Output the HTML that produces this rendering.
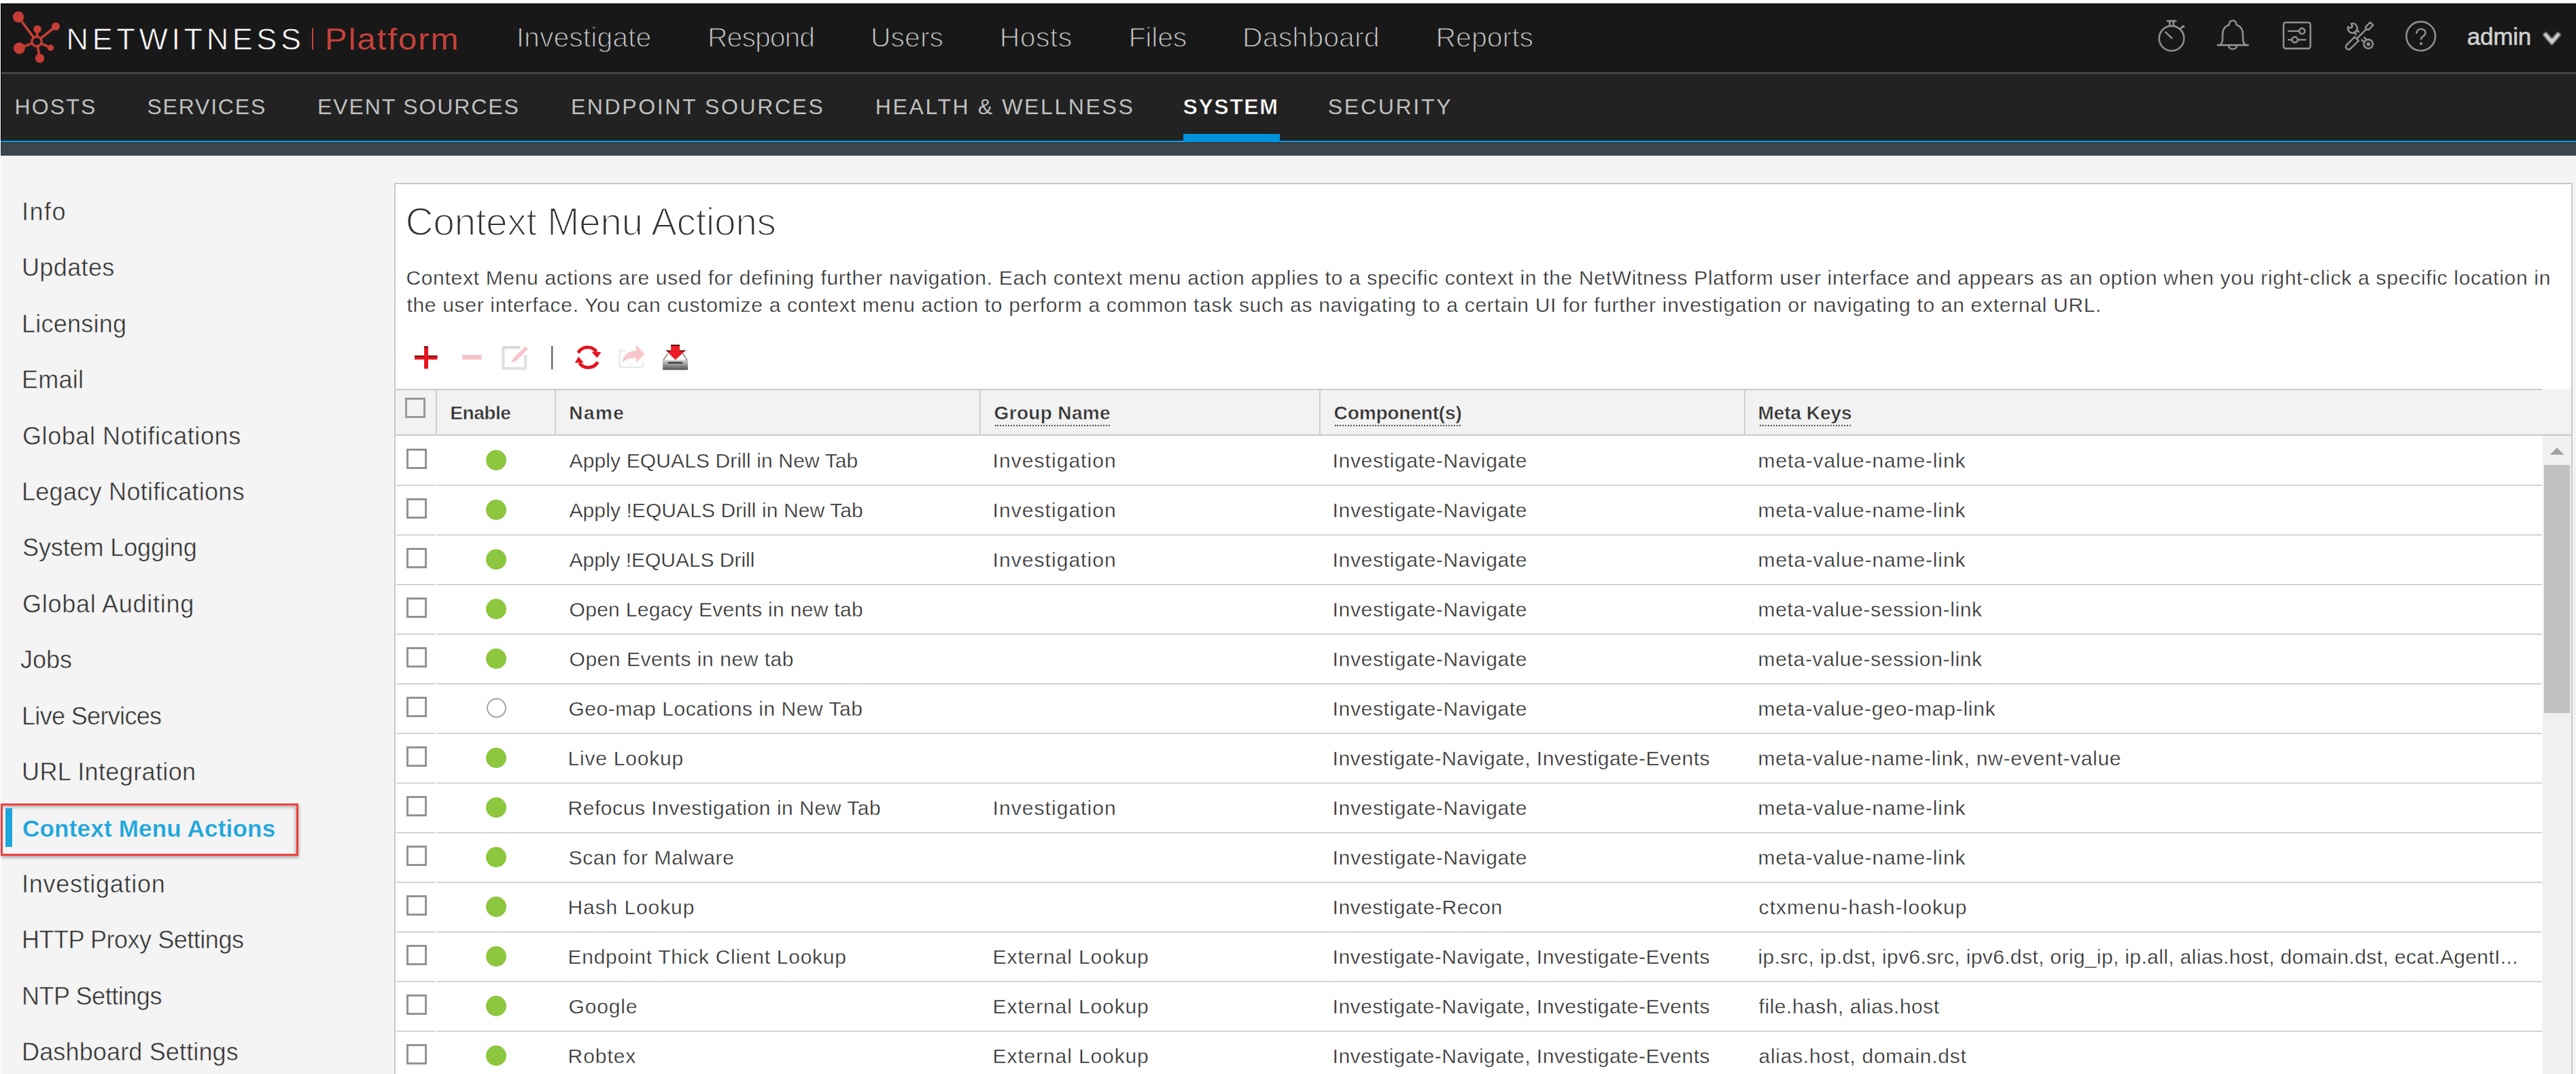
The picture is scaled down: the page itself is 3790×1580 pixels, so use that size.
<!DOCTYPE html>
<html><head><meta charset="utf-8">
<style>
html,body{margin:0;padding:0}
body{width:3790px;height:1580px;overflow:hidden;position:relative;background:#f4f4f4;font-family:"Liberation Sans",sans-serif}
.b{position:absolute}
.t{position:absolute;white-space:pre;line-height:1;font-family:"Liberation Sans",sans-serif}
svg{position:absolute;overflow:visible}
</style></head><body>
<!-- frame -->
<div class="b" style="left:0;top:0;width:3790px;height:5px;background:#fff"></div>
<div class="b" style="left:0;top:0;width:1px;height:1580px;background:#fff"></div>
<!-- top nav -->
<div class="b" style="left:1px;top:5px;width:3789px;height:102px;background:#181818"></div>
<div class="b" style="left:1px;top:5px;width:3789px;height:1px;background:#000"></div>
<div class="b" style="left:1px;top:5px;width:1px;height:224px;background:#000"></div>
<div class="b" style="left:2px;top:106px;width:3788px;height:3px;background:#434343"></div>
<!-- sub nav -->
<div class="b" style="left:2px;top:109px;width:3788px;height:98px;background:#222222"></div>
<div class="b" style="left:1px;top:207px;width:3789px;height:2px;background:#0d9de2"></div>
<div class="b" style="left:1741px;top:197px;width:142px;height:12px;background:#0093db"></div>
<div class="b" style="left:1px;top:209px;width:3789px;height:20px;background:#3a454e"></div><div class="b" style="left:1px;top:209px;width:3789px;height:2px;background:#343e46"></div>

<!-- logo -->
<svg style="left:0;top:0" width="100" height="100" viewBox="0 0 100 100">
 <g stroke="#c53d35" stroke-width="3.6" fill="none">
  <line x1="27" y1="25" x2="54" y2="61"/>
  <line x1="82" y1="39" x2="54" y2="61"/>
  <line x1="55" y1="43" x2="54" y2="61"/>
  <line x1="28.4" y1="71" x2="54" y2="61"/>
  <line x1="74.5" y1="70.3" x2="54" y2="61"/>
  <line x1="58.5" y1="85.7" x2="54" y2="61"/>
 </g>
 <circle cx="54" cy="61" r="5.6" fill="#181818"/>
 <circle cx="54" cy="61" r="7.2" stroke="#c53d35" stroke-width="3.2" fill="none"/>
 <g fill="#c53d35">
  <circle cx="27" cy="25" r="8.2"/>
  <circle cx="82" cy="39" r="6.1"/>
  <circle cx="55" cy="43" r="5.8"/>
  <circle cx="28.4" cy="71" r="8.4"/>
  <circle cx="74.5" cy="70.3" r="4.7"/>
  <circle cx="58.5" cy="85.7" r="6.7"/>
 </g>
</svg>
<div class="b" style="left:459px;top:41px;width:2px;height:32px;background:#c9423a"></div>

<!-- top right icons -->
<svg style="left:3150px;top:20px" width="640" height="70" viewBox="3150 20 640 70">
 <g stroke="#8e8e8e" stroke-width="2.6" fill="none" stroke-linecap="round" stroke-linejoin="round">
  <!-- stopwatch -->
  <circle cx="3195" cy="56.4" r="18.3"/>
  <line x1="3188.8" y1="30.9" x2="3201.2" y2="30.9"/>
  <line x1="3192.2" y1="31" x2="3192.2" y2="38.2"/>
  <line x1="3197.8" y1="31" x2="3197.8" y2="38.2"/>
  <line x1="3186.2" y1="47.3" x2="3195.2" y2="56.2"/>
  <line x1="3207.6" y1="42.4" x2="3211" y2="39.6"/>
  <!-- bell -->
  <path d="M3262.8 66.4 H3307.6"/>
  <path d="M3265 66.4 C3268.5 65 3270 62 3270 58 V51 C3270 43 3274 38.5 3279.5 36.5 C3280 31.5 3282 30.2 3285 30.2 C3288 30.2 3290 31.5 3290.5 36.5 C3296 38.5 3300 43 3300 51 V58 C3300 62 3301.5 65 3305 66.4"/>
  <path d="M3279 67.5 C3279 73.8 3291 73.8 3291 67.5"/>
  <!-- sliders -->
  <rect x="3359.8" y="33" width="39.4" height="38.4" rx="3.2"/>
  <line x1="3367" y1="45.7" x2="3383" y2="45.7"/>
  <circle cx="3386.9" cy="45.7" r="4.1"/>
  <line x1="3367" y1="58.5" x2="3372.3" y2="58.5"/>
  <circle cx="3376.4" cy="58.5" r="4.1"/>
  <line x1="3380.5" y1="58.5" x2="3392" y2="58.5"/>
  <!-- tools -->
  <g transform="translate(3472,52.3) rotate(-45)" stroke-linecap="butt">
   <path d="M-6.6 -4 H-23.4 A4 4 0 0 0 -23.4 4 H-6.6 Z"/>
   <line x1="-6.6" y1="0" x2="13" y2="0" stroke-width="2.6"/>
   <path d="M13 0 L15 -3 H24.5 V3 H15 Z"/>
  </g>
  <g transform="translate(3472.75,53) rotate(45)">
   <path d="M-22.3 -3.4 A7 7 0 1 1 -22.3 3.4 L-18.2 1.5 L-18.2 -1.5 Z"/>
   <line x1="-10.5" y1="-2.6" x2="-6" y2="-2.6"/><line x1="-10.5" y1="2.6" x2="-6" y2="2.6"/>
   <line x1="5.5" y1="-2.6" x2="10" y2="-2.6"/><line x1="5.5" y1="2.6" x2="10" y2="2.6"/>
   <circle cx="16.6" cy="0" r="6.6"/>
  </g>
  <circle cx="3484.5" cy="65" r="1.4" fill="#8e8e8e"/>
  <!-- help -->
  <circle cx="3561.7" cy="53.2" r="21.3"/>
  <path d="M3555.6 48.6 C3555.6 40.8 3568.6 40.8 3568.6 48.3 C3568.6 53.2 3562 53.2 3562 57.5"/>
 </g>
 <circle cx="3562" cy="64.3" r="2.1" fill="#8e8e8e"/><path d="M3209.3 37.6 L3213.6 41.9 L3213.9 37.3 Z" fill="#8e8e8e"/>
 <polyline points="3743.5,49 3754.5,61.8 3765.5,49" stroke="#d0d0d0" stroke-width="6" fill="none" style="filter:blur(1px)"/>
</svg>

<!-- sidebar selection -->
<div class="b" style="left:1px;top:1182px;width:438px;height:77px;box-sizing:border-box;border:3px solid #f23f3f;box-shadow:1px 3px 4px rgba(0,0,0,0.28), inset -2px 3px 4px rgba(0,0,0,0.25)"></div>
<div class="b" style="left:8px;top:1189px;width:10px;height:57px;background:#1ea6dc"></div>

<!-- panel -->
<div class="b" style="left:580px;top:269px;width:3205px;height:1400px;box-sizing:border-box;border:2px solid #c9c9c9;background:#fff"></div>

<!-- toolbar -->
<svg style="left:590px;top:495px" width="440" height="60" viewBox="590 495 440 60">
 <g fill="#e8151f">
  <rect x="610" y="523" width="33.5" height="6"/>
  <rect x="624" y="509.5" width="6" height="33"/>
 </g>
 <rect x="624" y="509.5" width="6" height="2" fill="#5a0a0a"/>
 <rect x="610" y="523" width="14" height="1.8" fill="#6a0a0a"/>
 <rect x="630" y="523" width="13.5" height="1.8" fill="#6a0a0a"/>
 <rect x="680" y="522" width="28.5" height="7" fill="#f6c4c8"/>
 <path d="M765.4 511.6 H740.2 V541.9 H773.2 V522.3" stroke="#e2e2e2" stroke-width="4.4" fill="none"/>
 <path d="M765.4 510.4 H740.2" stroke="#d2d2d2" stroke-width="2" fill="none"/>
 <path d="M752 533.6 L755 527 L772.5 509.5 L777 513.5 L759.5 531 Z" fill="#f8c6c9"/>
 <rect x="811" y="509" width="2.5" height="34.5" fill="#6e6e6e"/>
 <g fill="none" stroke="#e3141e" stroke-width="4.8">
  <path d="M850.6 519 A16 16 0 0 1 877.6 517.5"/>
  <path d="M879.5 532.5 A16 16 0 0 1 852.4 533.8"/>
 </g>
 <path d="M870 517.5 L884.5 518 L878.6 526.5 Z" fill="#e3141e"/>
 <path d="M845.8 533.8 L858.8 533.5 L851.2 524.8 Z" fill="#e3141e"/>
 <path d="M919.6 515.7 H911.7 V540.2 H945.5 V532" stroke="#e9e9e9" stroke-width="2.6" fill="none"/>
 <path d="M915 534 C917 522 925 515.7 935.8 515.7 V507 L948.6 520.7 L935.8 533.5 V526.8 C926 526.8 919 529 915 534 Z" fill="#f8c7ca"/>
 <defs><linearGradient id="tg" x1="0" y1="0" x2="0" y2="1"><stop offset="0" stop-color="#d4d4d4"/><stop offset="0.45" stop-color="#9a9a9a"/><stop offset="1" stop-color="#555"/></linearGradient></defs>
 <path d="M975.1 544.2 V529.6 H1012 V544.2 Z" fill="url(#tg)"/>
 <path d="M976 530 L982.5 520 M1011 530 L1004.5 520" stroke="#9a9a9a" stroke-width="2" fill="none"/>
 <rect x="982.7" y="532.4" width="21.8" height="2.4" rx="1" fill="#333"/>
 <path d="M987.2 507 H1000 V515.4 H1008.9 L993.6 529.6 L979.9 515.4 H987.2 Z" fill="#ec1c24"/>
 <rect x="987.2" y="507" width="12.8" height="2" fill="#5a0808"/>
 <path d="M979.9 515.4 H987.2 V517 H981.5 Z M1000 515.4 H1008.9 L1007.3 517 H1000 Z" fill="#5a0808"/>
</svg>

<!-- table header -->
<div class="b" style="left:582px;top:572px;width:3201px;height:67px;background:#f2f2f2"></div>
<div class="b" style="left:582px;top:572px;width:3158px;height:2px;background:#cacaca"></div>
<div class="b" style="left:582px;top:639px;width:3201px;height:2px;background:#c8c8c8"></div>
<div class="b" style="left:641px;top:574px;width:2px;height:65px;background:#cfcfcf"></div>
<div class="b" style="left:816px;top:574px;width:2px;height:65px;background:#cfcfcf"></div>
<div class="b" style="left:1441px;top:574px;width:2px;height:65px;background:#cfcfcf"></div>
<div class="b" style="left:1941px;top:574px;width:2px;height:65px;background:#cfcfcf"></div>
<div class="b" style="left:2566px;top:574px;width:2px;height:65px;background:#cfcfcf"></div>
<div class="b" style="left:595.5px;top:584.5px;width:30px;height:30px;box-sizing:border-box;border:3px solid #979b9a"></div>
<div class="b" style="left:1463.6px;top:625px;width:169px;height:0;border-top:2px dotted #4a4a4a"></div>
<div class="b" style="left:1963.6px;top:625px;width:185.4px;height:0;border-top:2px dotted #4a4a4a"></div>
<div class="b" style="left:2588.6px;top:625px;width:134.4px;height:0;border-top:2px dotted #4a4a4a"></div>

<!-- rows -->
<div class=b style='left:583px;top:713px;width:58px;height:2px;background:#d4d4d4'></div><div class=b style='left:643px;top:713px;width:3097px;height:2px;background:#d4d4d4'></div>
<div class=b style='left:597.5px;top:660px;width:30px;height:30px;box-sizing:border-box;border:3px solid #939393'></div>
<div class=b style='left:715px;top:661.7px;width:30px;height:30px;border-radius:50%;background:#8dc63f'></div>
<div class=b style='left:583px;top:786px;width:58px;height:2px;background:#d4d4d4'></div><div class=b style='left:643px;top:786px;width:3097px;height:2px;background:#d4d4d4'></div>
<div class=b style='left:597.5px;top:733px;width:30px;height:30px;box-sizing:border-box;border:3px solid #939393'></div>
<div class=b style='left:715px;top:734.7px;width:30px;height:30px;border-radius:50%;background:#8dc63f'></div>
<div class=b style='left:583px;top:859px;width:58px;height:2px;background:#d4d4d4'></div><div class=b style='left:643px;top:859px;width:3097px;height:2px;background:#d4d4d4'></div>
<div class=b style='left:597.5px;top:806px;width:30px;height:30px;box-sizing:border-box;border:3px solid #939393'></div>
<div class=b style='left:715px;top:807.7px;width:30px;height:30px;border-radius:50%;background:#8dc63f'></div>
<div class=b style='left:583px;top:932px;width:58px;height:2px;background:#d4d4d4'></div><div class=b style='left:643px;top:932px;width:3097px;height:2px;background:#d4d4d4'></div>
<div class=b style='left:597.5px;top:879px;width:30px;height:30px;box-sizing:border-box;border:3px solid #939393'></div>
<div class=b style='left:715px;top:880.7px;width:30px;height:30px;border-radius:50%;background:#8dc63f'></div>
<div class=b style='left:583px;top:1005px;width:58px;height:2px;background:#d4d4d4'></div><div class=b style='left:643px;top:1005px;width:3097px;height:2px;background:#d4d4d4'></div>
<div class=b style='left:597.5px;top:952px;width:30px;height:30px;box-sizing:border-box;border:3px solid #939393'></div>
<div class=b style='left:715px;top:953.7px;width:30px;height:30px;border-radius:50%;background:#8dc63f'></div>
<div class=b style='left:583px;top:1078px;width:58px;height:2px;background:#d4d4d4'></div><div class=b style='left:643px;top:1078px;width:3097px;height:2px;background:#d4d4d4'></div>
<div class=b style='left:597.5px;top:1025px;width:30px;height:30px;box-sizing:border-box;border:3px solid #939393'></div>
<div class=b style='left:715.5px;top:1027.2px;width:29px;height:29px;box-sizing:border-box;border-radius:50%;border:2px solid #a5a5a5'></div>
<div class=b style='left:583px;top:1151px;width:58px;height:2px;background:#d4d4d4'></div><div class=b style='left:643px;top:1151px;width:3097px;height:2px;background:#d4d4d4'></div>
<div class=b style='left:597.5px;top:1098px;width:30px;height:30px;box-sizing:border-box;border:3px solid #939393'></div>
<div class=b style='left:715px;top:1099.7px;width:30px;height:30px;border-radius:50%;background:#8dc63f'></div>
<div class=b style='left:583px;top:1224px;width:58px;height:2px;background:#d4d4d4'></div><div class=b style='left:643px;top:1224px;width:3097px;height:2px;background:#d4d4d4'></div>
<div class=b style='left:597.5px;top:1171px;width:30px;height:30px;box-sizing:border-box;border:3px solid #939393'></div>
<div class=b style='left:715px;top:1172.7px;width:30px;height:30px;border-radius:50%;background:#8dc63f'></div>
<div class=b style='left:583px;top:1297px;width:58px;height:2px;background:#d4d4d4'></div><div class=b style='left:643px;top:1297px;width:3097px;height:2px;background:#d4d4d4'></div>
<div class=b style='left:597.5px;top:1244px;width:30px;height:30px;box-sizing:border-box;border:3px solid #939393'></div>
<div class=b style='left:715px;top:1245.7px;width:30px;height:30px;border-radius:50%;background:#8dc63f'></div>
<div class=b style='left:583px;top:1370px;width:58px;height:2px;background:#d4d4d4'></div><div class=b style='left:643px;top:1370px;width:3097px;height:2px;background:#d4d4d4'></div>
<div class=b style='left:597.5px;top:1317px;width:30px;height:30px;box-sizing:border-box;border:3px solid #939393'></div>
<div class=b style='left:715px;top:1318.7px;width:30px;height:30px;border-radius:50%;background:#8dc63f'></div>
<div class=b style='left:583px;top:1443px;width:58px;height:2px;background:#d4d4d4'></div><div class=b style='left:643px;top:1443px;width:3097px;height:2px;background:#d4d4d4'></div>
<div class=b style='left:597.5px;top:1390px;width:30px;height:30px;box-sizing:border-box;border:3px solid #939393'></div>
<div class=b style='left:715px;top:1391.7px;width:30px;height:30px;border-radius:50%;background:#8dc63f'></div>
<div class=b style='left:583px;top:1516px;width:58px;height:2px;background:#d4d4d4'></div><div class=b style='left:643px;top:1516px;width:3097px;height:2px;background:#d4d4d4'></div>
<div class=b style='left:597.5px;top:1463px;width:30px;height:30px;box-sizing:border-box;border:3px solid #939393'></div>
<div class=b style='left:715px;top:1464.7px;width:30px;height:30px;border-radius:50%;background:#8dc63f'></div>
<div class=b style='left:583px;top:1589px;width:58px;height:2px;background:#d4d4d4'></div><div class=b style='left:643px;top:1589px;width:3097px;height:2px;background:#d4d4d4'></div>
<div class=b style='left:597.5px;top:1536px;width:30px;height:30px;box-sizing:border-box;border:3px solid #939393'></div>
<div class=b style='left:715px;top:1537.7px;width:30px;height:30px;border-radius:50%;background:#8dc63f'></div>

<!-- scrollbar -->
<div class="b" style="left:3741px;top:641px;width:42px;height:939px;background:#f0f0f0"></div>
<svg style="left:3740px;top:650px" width="45" height="30" viewBox="3740 650 45 30"><path d="M3751.5 669 L3762 658.5 L3772.5 669 Z" fill="#a3a3a3"/></svg>
<div class="b" style="left:3743px;top:684px;width:38px;height:365px;background:#c1c1c1"></div>

<div class=t style="left:97.6px;top:34.9px;font-size:45px;font-weight:normal;color:#ffffff;letter-spacing:5.600px;-webkit-text-stroke:0.8px #181818">NETWITNESS</div>
<div class=t style="left:478.1px;top:34.9px;font-size:45px;font-weight:normal;color:#c6403a;letter-spacing:1.610px;transform:scaleX(1.100);transform-origin:0 0;">Platform</div>
<div class=t style="left:759.7px;top:34.9px;font-size:41px;font-weight:normal;color:#c6c6c6;letter-spacing:0.030px;-webkit-text-stroke:1.3px #181818">Investigate</div>
<div class=t style="left:1041.0px;top:34.9px;font-size:41px;font-weight:normal;color:#c6c6c6;letter-spacing:-1.000px;-webkit-text-stroke:1.3px #181818">Respond</div>
<div class=t style="left:1281.0px;top:34.9px;font-size:41px;font-weight:normal;color:#c6c6c6;letter-spacing:0.000px;-webkit-text-stroke:1.3px #181818">Users</div>
<div class=t style="left:1470.7px;top:34.9px;font-size:41px;font-weight:normal;color:#c6c6c6;letter-spacing:0.425px;-webkit-text-stroke:1.3px #181818">Hosts</div>
<div class=t style="left:1660.5px;top:34.9px;font-size:41px;font-weight:normal;color:#c6c6c6;letter-spacing:-0.200px;-webkit-text-stroke:1.3px #181818">Files</div>
<div class=t style="left:1828.0px;top:34.9px;font-size:41px;font-weight:normal;color:#c6c6c6;letter-spacing:0.125px;-webkit-text-stroke:1.3px #181818">Dashboard</div>
<div class=t style="left:2112.5px;top:34.9px;font-size:41px;font-weight:normal;color:#c6c6c6;letter-spacing:0.000px;-webkit-text-stroke:1.3px #181818">Reports</div>
<div class=t style="left:3629.8px;top:35.9px;font-size:35px;font-weight:normal;color:#d0d0d0;letter-spacing:-0.200px;-webkit-text-stroke:0.6px #d0d0d0">admin</div>
<div class=t style="left:21.4px;top:141.1px;font-size:32px;font-weight:normal;color:#bfbfbf;letter-spacing:2.150px;">HOSTS</div>
<div class=t style="left:216.4px;top:141.1px;font-size:32px;font-weight:normal;color:#bfbfbf;letter-spacing:1.800px;">SERVICES</div>
<div class=t style="left:467.0px;top:141.1px;font-size:32px;font-weight:normal;color:#bfbfbf;letter-spacing:1.892px;">EVENT SOURCES</div>
<div class=t style="left:839.9px;top:141.1px;font-size:32px;font-weight:normal;color:#bfbfbf;letter-spacing:2.607px;">ENDPOINT SOURCES</div>
<div class=t style="left:1287.8px;top:141.1px;font-size:32px;font-weight:normal;color:#bfbfbf;letter-spacing:2.606px;">HEALTH &amp; WELLNESS</div>
<div class=t style="left:1953.8px;top:141.1px;font-size:32px;font-weight:normal;color:#bfbfbf;letter-spacing:2.700px;">SECURITY</div>
<div class=t style="left:1740.5px;top:141.1px;font-size:32px;font-weight:bold;color:#ffffff;letter-spacing:1.560px;-webkit-text-stroke:0.5px #222">SYSTEM</div>
<div class=t style="left:32.0px;top:293.9px;font-size:36px;font-weight:normal;color:#333333;letter-spacing:1.500px;-webkit-text-stroke:0.5px #f4f4f4">Info</div>
<div class=t style="left:32.0px;top:376.3px;font-size:36px;font-weight:normal;color:#333333;letter-spacing:0.367px;-webkit-text-stroke:0.5px #f4f4f4">Updates</div>
<div class=t style="left:32.0px;top:458.7px;font-size:36px;font-weight:normal;color:#333333;letter-spacing:0.250px;-webkit-text-stroke:0.5px #f4f4f4">Licensing</div>
<div class=t style="left:32.0px;top:541.1px;font-size:36px;font-weight:normal;color:#333333;letter-spacing:0.250px;-webkit-text-stroke:0.5px #f4f4f4">Email</div>
<div class=t style="left:33.0px;top:623.5px;font-size:36px;font-weight:normal;color:#333333;letter-spacing:0.579px;-webkit-text-stroke:0.5px #f4f4f4">Global Notifications</div>
<div class=t style="left:32.0px;top:705.9px;font-size:36px;font-weight:normal;color:#333333;letter-spacing:0.289px;-webkit-text-stroke:0.5px #f4f4f4">Legacy Notifications</div>
<div class=t style="left:33.0px;top:788.3px;font-size:36px;font-weight:normal;color:#333333;letter-spacing:-0.115px;-webkit-text-stroke:0.5px #f4f4f4">System Logging</div>
<div class=t style="left:33.0px;top:870.7px;font-size:36px;font-weight:normal;color:#333333;letter-spacing:0.714px;-webkit-text-stroke:0.5px #f4f4f4">Global Auditing</div>
<div class=t style="left:30.0px;top:953.1px;font-size:36px;font-weight:normal;color:#333333;letter-spacing:0.000px;-webkit-text-stroke:0.5px #f4f4f4">Jobs</div>
<div class=t style="left:32.0px;top:1035.5px;font-size:36px;font-weight:normal;color:#333333;letter-spacing:-0.667px;-webkit-text-stroke:0.5px #f4f4f4">Live Services</div>
<div class=t style="left:32.0px;top:1117.9px;font-size:36px;font-weight:normal;color:#333333;letter-spacing:0.379px;-webkit-text-stroke:0.5px #f4f4f4">URL Integration</div>
<div class=t style="left:33.0px;top:1201.2px;font-size:35px;font-weight:bold;color:#1ea6dc;letter-spacing:0.211px;-webkit-text-stroke:0.25px #f4f4f4">Context Menu Actions</div>
<div class=t style="left:32.0px;top:1282.7px;font-size:36px;font-weight:normal;color:#333333;letter-spacing:0.717px;-webkit-text-stroke:0.5px #f4f4f4">Investigation</div>
<div class=t style="left:32.0px;top:1365.1px;font-size:36px;font-weight:normal;color:#333333;letter-spacing:-0.472px;-webkit-text-stroke:0.5px #f4f4f4">HTTP Proxy Settings</div>
<div class=t style="left:32.0px;top:1447.5px;font-size:36px;font-weight:normal;color:#333333;letter-spacing:-0.455px;-webkit-text-stroke:0.5px #f4f4f4">NTP Settings</div>
<div class=t style="left:32.0px;top:1529.9px;font-size:36px;font-weight:normal;color:#333333;letter-spacing:0.153px;-webkit-text-stroke:0.5px #f4f4f4">Dashboard Settings</div>
<div class=t style="left:596.5px;top:298.2px;font-size:57px;font-weight:normal;color:#333333;letter-spacing:-0.474px;-webkit-text-stroke:2px #fff">Context Menu Actions</div>
<div class=t style="left:597.4px;top:393.6px;font-size:30px;font-weight:normal;color:#333333;letter-spacing:0.690px;-webkit-text-stroke:0.35px #fff">Context Menu actions are used for defining further navigation. Each context menu action applies to a specific context in the NetWitness Platform user interface and appears as an option when you right-click a specific location in</div>
<div class=t style="left:598.4px;top:434.4px;font-size:30px;font-weight:normal;color:#333333;letter-spacing:0.693px;-webkit-text-stroke:0.35px #fff">the user interface. You can customize a context menu action to perform a common task such as navigating to a certain UI for further investigation or navigating to an external URL.</div>
<div class=t style="left:662.3px;top:594.3px;font-size:28px;font-weight:bold;color:#333333;letter-spacing:-0.460px;-webkit-text-stroke:0.5px #f2f2f2">Enable</div>
<div class=t style="left:837.3px;top:594.3px;font-size:28px;font-weight:bold;color:#333333;letter-spacing:1.433px;-webkit-text-stroke:0.5px #f2f2f2">Name</div>
<div class=t style="left:1462.6px;top:594.3px;font-size:28px;font-weight:bold;color:#333333;letter-spacing:0.333px;-webkit-text-stroke:0.5px #f2f2f2">Group Name</div>
<div class=t style="left:1962.6px;top:594.3px;font-size:28px;font-weight:bold;color:#333333;letter-spacing:-0.145px;-webkit-text-stroke:0.5px #f2f2f2">Component(s)</div>
<div class=t style="left:2586.6px;top:594.3px;font-size:28px;font-weight:bold;color:#333333;letter-spacing:-0.075px;-webkit-text-stroke:0.5px #f2f2f2">Meta Keys</div>
<div class=t style="left:837.5px;top:663.1px;font-size:30px;font-weight:normal;color:#333333;letter-spacing:0.125px;-webkit-text-stroke:0.35px #fff">Apply EQUALS Drill in New Tab</div>
<div class=t style="left:1460.6px;top:663.1px;font-size:30px;font-weight:normal;color:#333333;letter-spacing:1.050px;-webkit-text-stroke:0.35px #fff">Investigation</div>
<div class=t style="left:1960.6px;top:663.1px;font-size:30px;font-weight:normal;color:#333333;letter-spacing:0.653px;-webkit-text-stroke:0.35px #fff">Investigate-Navigate</div>
<div class=t style="left:2586.6px;top:663.1px;font-size:30px;font-weight:normal;color:#333333;letter-spacing:0.863px;-webkit-text-stroke:0.35px #fff">meta-value-name-link</div>
<div class=t style="left:837.5px;top:736.1px;font-size:30px;font-weight:normal;color:#333333;letter-spacing:0.086px;-webkit-text-stroke:0.35px #fff">Apply !EQUALS Drill in New Tab</div>
<div class=t style="left:1460.6px;top:736.1px;font-size:30px;font-weight:normal;color:#333333;letter-spacing:1.050px;-webkit-text-stroke:0.35px #fff">Investigation</div>
<div class=t style="left:1960.6px;top:736.1px;font-size:30px;font-weight:normal;color:#333333;letter-spacing:0.653px;-webkit-text-stroke:0.35px #fff">Investigate-Navigate</div>
<div class=t style="left:2586.6px;top:736.1px;font-size:30px;font-weight:normal;color:#333333;letter-spacing:0.863px;-webkit-text-stroke:0.35px #fff">meta-value-name-link</div>
<div class=t style="left:837.5px;top:809.1px;font-size:30px;font-weight:normal;color:#333333;letter-spacing:-0.028px;-webkit-text-stroke:0.35px #fff">Apply !EQUALS Drill</div>
<div class=t style="left:1460.6px;top:809.1px;font-size:30px;font-weight:normal;color:#333333;letter-spacing:1.050px;-webkit-text-stroke:0.35px #fff">Investigation</div>
<div class=t style="left:1960.6px;top:809.1px;font-size:30px;font-weight:normal;color:#333333;letter-spacing:0.653px;-webkit-text-stroke:0.35px #fff">Investigate-Navigate</div>
<div class=t style="left:2586.6px;top:809.1px;font-size:30px;font-weight:normal;color:#333333;letter-spacing:0.863px;-webkit-text-stroke:0.35px #fff">meta-value-name-link</div>
<div class=t style="left:837.5px;top:882.1px;font-size:30px;font-weight:normal;color:#333333;letter-spacing:0.304px;-webkit-text-stroke:0.35px #fff">Open Legacy Events in new tab</div>
<div class=t style="left:1960.6px;top:882.1px;font-size:30px;font-weight:normal;color:#333333;letter-spacing:0.653px;-webkit-text-stroke:0.35px #fff">Investigate-Navigate</div>
<div class=t style="left:2586.6px;top:882.1px;font-size:30px;font-weight:normal;color:#333333;letter-spacing:0.655px;-webkit-text-stroke:0.35px #fff">meta-value-session-link</div>
<div class=t style="left:837.5px;top:955.1px;font-size:30px;font-weight:normal;color:#333333;letter-spacing:0.548px;-webkit-text-stroke:0.35px #fff">Open Events in new tab</div>
<div class=t style="left:1960.6px;top:955.1px;font-size:30px;font-weight:normal;color:#333333;letter-spacing:0.653px;-webkit-text-stroke:0.35px #fff">Investigate-Navigate</div>
<div class=t style="left:2586.6px;top:955.1px;font-size:30px;font-weight:normal;color:#333333;letter-spacing:0.655px;-webkit-text-stroke:0.35px #fff">meta-value-session-link</div>
<div class=t style="left:836.5px;top:1028.1px;font-size:30px;font-weight:normal;color:#333333;letter-spacing:0.537px;-webkit-text-stroke:0.35px #fff">Geo-map Locations in New Tab</div>
<div class=t style="left:1960.6px;top:1028.1px;font-size:30px;font-weight:normal;color:#333333;letter-spacing:0.653px;-webkit-text-stroke:0.35px #fff">Investigate-Navigate</div>
<div class=t style="left:2586.6px;top:1028.1px;font-size:30px;font-weight:normal;color:#333333;letter-spacing:0.791px;-webkit-text-stroke:0.35px #fff">meta-value-geo-map-link</div>
<div class=t style="left:835.5px;top:1101.1px;font-size:30px;font-weight:normal;color:#333333;letter-spacing:0.790px;-webkit-text-stroke:0.35px #fff">Live Lookup</div>
<div class=t style="left:1960.6px;top:1101.1px;font-size:30px;font-weight:normal;color:#333333;letter-spacing:0.459px;-webkit-text-stroke:0.35px #fff">Investigate-Navigate, Investigate-Events</div>
<div class=t style="left:2586.6px;top:1101.1px;font-size:30px;font-weight:normal;color:#333333;letter-spacing:0.726px;-webkit-text-stroke:0.35px #fff">meta-value-name-link, nw-event-value</div>
<div class=t style="left:835.5px;top:1174.1px;font-size:30px;font-weight:normal;color:#333333;letter-spacing:0.555px;-webkit-text-stroke:0.35px #fff">Refocus Investigation in New Tab</div>
<div class=t style="left:1460.6px;top:1174.1px;font-size:30px;font-weight:normal;color:#333333;letter-spacing:1.050px;-webkit-text-stroke:0.35px #fff">Investigation</div>
<div class=t style="left:1960.6px;top:1174.1px;font-size:30px;font-weight:normal;color:#333333;letter-spacing:0.653px;-webkit-text-stroke:0.35px #fff">Investigate-Navigate</div>
<div class=t style="left:2586.6px;top:1174.1px;font-size:30px;font-weight:normal;color:#333333;letter-spacing:0.863px;-webkit-text-stroke:0.35px #fff">meta-value-name-link</div>
<div class=t style="left:836.5px;top:1247.1px;font-size:30px;font-weight:normal;color:#333333;letter-spacing:0.667px;-webkit-text-stroke:0.35px #fff">Scan for Malware</div>
<div class=t style="left:1960.6px;top:1247.1px;font-size:30px;font-weight:normal;color:#333333;letter-spacing:0.653px;-webkit-text-stroke:0.35px #fff">Investigate-Navigate</div>
<div class=t style="left:2586.6px;top:1247.1px;font-size:30px;font-weight:normal;color:#333333;letter-spacing:0.863px;-webkit-text-stroke:0.35px #fff">meta-value-name-link</div>
<div class=t style="left:835.5px;top:1320.1px;font-size:30px;font-weight:normal;color:#333333;letter-spacing:0.910px;-webkit-text-stroke:0.35px #fff">Hash Lookup</div>
<div class=t style="left:1960.6px;top:1320.1px;font-size:30px;font-weight:normal;color:#333333;letter-spacing:0.488px;-webkit-text-stroke:0.35px #fff">Investigate-Recon</div>
<div class=t style="left:2587.6px;top:1320.1px;font-size:30px;font-weight:normal;color:#333333;letter-spacing:1.056px;-webkit-text-stroke:0.35px #fff">ctxmenu-hash-lookup</div>
<div class=t style="left:835.5px;top:1393.1px;font-size:30px;font-weight:normal;color:#333333;letter-spacing:0.730px;-webkit-text-stroke:0.35px #fff">Endpoint Thick Client Lookup</div>
<div class=t style="left:1460.6px;top:1393.1px;font-size:30px;font-weight:normal;color:#333333;letter-spacing:0.886px;-webkit-text-stroke:0.35px #fff">External Lookup</div>
<div class=t style="left:1960.6px;top:1393.1px;font-size:30px;font-weight:normal;color:#333333;letter-spacing:0.459px;-webkit-text-stroke:0.35px #fff">Investigate-Navigate, Investigate-Events</div>
<div class=t style="left:2586.6px;top:1393.1px;font-size:30px;font-weight:normal;color:#333333;letter-spacing:0.360px;-webkit-text-stroke:0.35px #fff">ip.src, ip.dst, ipv6.src, ipv6.dst, orig_ip, ip.all, alias.host, domain.dst, ecat.AgentI...</div>
<div class=t style="left:836.5px;top:1466.1px;font-size:30px;font-weight:normal;color:#333333;letter-spacing:0.840px;-webkit-text-stroke:0.35px #fff">Google</div>
<div class=t style="left:1460.6px;top:1466.1px;font-size:30px;font-weight:normal;color:#333333;letter-spacing:0.886px;-webkit-text-stroke:0.35px #fff">External Lookup</div>
<div class=t style="left:1960.6px;top:1466.1px;font-size:30px;font-weight:normal;color:#333333;letter-spacing:0.459px;-webkit-text-stroke:0.35px #fff">Investigate-Navigate, Investigate-Events</div>
<div class=t style="left:2587.6px;top:1466.1px;font-size:30px;font-weight:normal;color:#333333;letter-spacing:0.520px;-webkit-text-stroke:0.35px #fff">file.hash, alias.host</div>
<div class=t style="left:835.5px;top:1539.1px;font-size:30px;font-weight:normal;color:#333333;letter-spacing:0.960px;-webkit-text-stroke:0.35px #fff">Robtex</div>
<div class=t style="left:1460.6px;top:1539.1px;font-size:30px;font-weight:normal;color:#333333;letter-spacing:0.886px;-webkit-text-stroke:0.35px #fff">External Lookup</div>
<div class=t style="left:1960.6px;top:1539.1px;font-size:30px;font-weight:normal;color:#333333;letter-spacing:0.459px;-webkit-text-stroke:0.35px #fff">Investigate-Navigate, Investigate-Events</div>
<div class=t style="left:2587.6px;top:1539.1px;font-size:30px;font-weight:normal;color:#333333;letter-spacing:0.714px;-webkit-text-stroke:0.35px #fff">alias.host, domain.dst</div>
</body></html>
